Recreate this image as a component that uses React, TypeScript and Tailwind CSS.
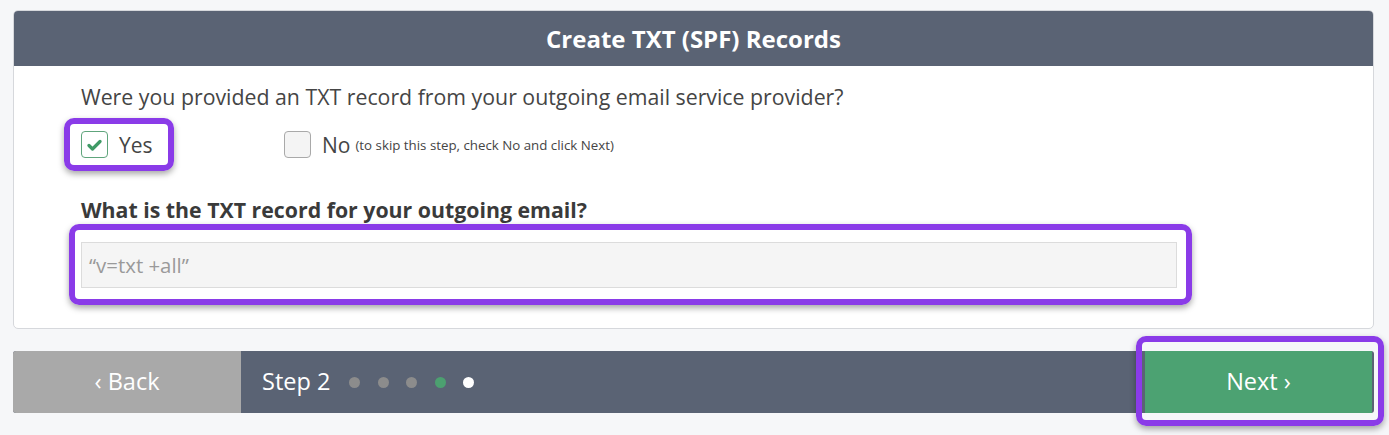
import React from 'react';

const Highlight = ({ className }: { className: string }) => (
  <span
    className={`pointer-events-none absolute rounded-[10px] border-[6px] border-[#8a3be8] shadow-[0_3px_6px_rgba(0,0,0,0.35)] ${className}`}
  />
);

export default function App() {
  const dots = ['bg-[#8c8c8c]', 'bg-[#8c8c8c]', 'bg-[#8c8c8c]', 'bg-[#4ca070]', 'bg-white'];

  return (
    <div
      className="min-h-[435px] w-[1389px] bg-[#f6f7f9] px-[13px] pt-[10px]"
      style={{ fontFamily: '"Open Sans", "Liberation Sans", sans-serif' }}
    >
      {/* Card */}
      <div className="w-[1361px] overflow-hidden rounded-[5px] border border-[#d6d8dc] bg-white">
        <div className="flex h-[55px] items-center justify-center bg-[#5a6374]">
          <h1 className="text-[24px] font-bold text-white">Create TXT (SPF) Records</h1>
        </div>

        <div className="px-[67px] pb-[40px] pt-[19px]">
          <p className="text-[21.3px] leading-[24px] text-[#454545]">
            Were you provided an TXT record from your outgoing email service provider?
          </p>

          {/* Yes / No */}
          <div className="mt-[22px] flex items-center">
            <div className="relative flex w-[203px] items-center">
              <Highlight className="-left-[17px] -top-[13px] h-[53px] w-[110px]" />
              <span className="flex h-[27px] w-[27px] items-center justify-center rounded-[4px] border border-[#5fa57c] bg-white">
                <svg width="15" height="12" viewBox="0 0 15 12">
                  <path d="M2 6.5 L5.5 10 L13 2.5" fill="none" stroke="#3f9a66" strokeWidth="3.2" strokeLinecap="round" strokeLinejoin="round" />
                </svg>
              </span>
              <span className="ml-[11px] text-[21px] leading-[24px] text-[#454545]">Yes</span>
            </div>
            <div className="flex items-center">
              <span className="h-[27px] w-[27px] rounded-[4px] border border-[#a9a9a9] bg-[#f4f4f4]" />
              <span className="ml-[11px] text-[21px] leading-[24px] text-[#454545]">No</span>
              <span className="ml-[5px] mt-[3px] text-[13.3px] text-[#454545]">(to skip this step, check No and click Next)</span>
            </div>
          </div>

          <h2 className="mt-[40px] text-[21.3px] font-bold leading-[24px] text-[#3a3a3a]">
            What is the TXT record for your outgoing email?
          </h2>

          <div className="relative mt-[20px] w-[1096px]">
            <Highlight className="-left-[12px] -top-[18px] h-[81px] w-[1123px]" />
            <div className="flex h-[46px] items-center border border-[#dcdcdc] bg-[#f5f5f5] px-[7px] text-[20.4px] text-[#9a9a9a]">
              “v=txt +all”
            </div>
          </div>
        </div>
      </div>

      {/* Footer bar */}
      <div className="mt-[22px] flex h-[62px] w-[1361px] overflow-visible rounded-[3px] bg-[#5a6374]">
        <button className="flex w-[228px] items-center justify-center rounded-l-[3px] bg-[#a9a9a9] text-[23.5px] text-white">
          ‹ Back
        </button>
        <div className="flex flex-1 items-center pl-[21px]">
          <span className="text-[23.5px] text-white">Step 2</span>
          <div className="ml-[19px] flex items-center gap-[17.5px]">
            {dots.map((c, i) => (
              <span key={i} className={`h-[11px] w-[11px] rounded-full ${c}`} />
            ))}
          </div>
        </div>
        <div className="relative flex w-[229px] items-stretch">
          <Highlight className="-left-[9px] -top-[15px] h-[90px] w-[248px]" />
          <button className="flex w-[227px] items-center justify-center bg-[#4ca272] text-[23.5px] text-white">
            Next ›
          </button>
        </div>
      </div>
    </div>
  );
}
